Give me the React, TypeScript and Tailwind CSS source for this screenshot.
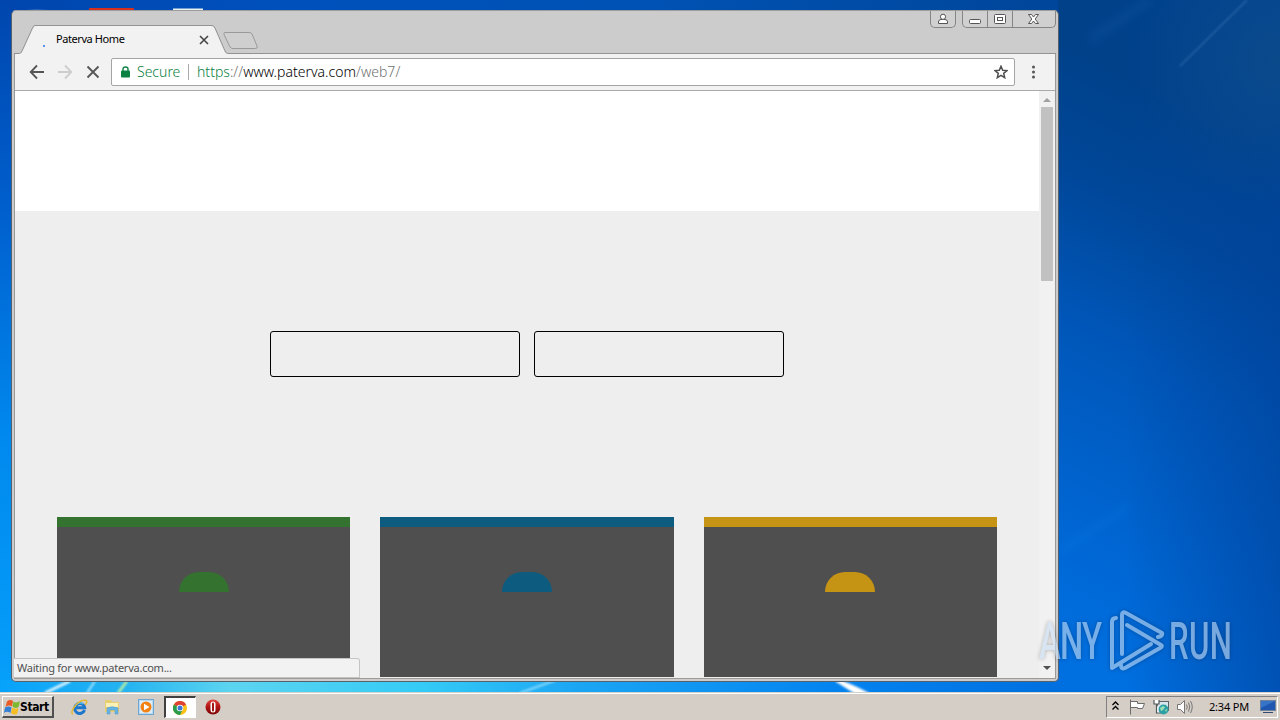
import type { ReactNode } from 'react'

const cards = [
  { name: 'green', bar: 'bg-[#34732f]' },
  { name: 'blue', bar: 'bg-[#0d5c80]' },
  { name: 'yellow', bar: 'bg-[#c69414]' },
]

function Wallpaper() {
  return (
    <svg className="absolute inset-0" width="1280" height="720" aria-hidden="true">
      <defs>
        <linearGradient id="left" x1="0" y1="0" x2="0" y2="1">
          <stop offset="0" stopColor="#0046ae" />
          <stop offset="0.3" stopColor="#0060ce" />
          <stop offset="0.6" stopColor="#0088ee" />
          <stop offset="1" stopColor="#06a2fb" />
        </linearGradient>
        <linearGradient id="top" x1="0" y1="0" x2="1" y2="0">
          <stop offset="0" stopColor="#0046ae" />
          <stop offset="0.25" stopColor="#0050bc" />
          <stop offset="0.6" stopColor="#0052b4" />
          <stop offset="1" stopColor="#00469a" />
        </linearGradient>
        <linearGradient id="right" gradientUnits="userSpaceOnUse" x1="1050" y1="640" x2="1290" y2="160">
          <stop offset="0" stopColor="#006fe0" />
          <stop offset="0.25" stopColor="#0064d0" />
          <stop offset="0.55" stopColor="#0056b8" />
          <stop offset="0.8" stopColor="#004799" />
          <stop offset="1" stopColor="#00418a" />
        </linearGradient>
        <linearGradient id="edge" x1="0" y1="0" x2="1" y2="0">
          <stop offset="0.3" stopColor="#00439c" stopOpacity="0" />
          <stop offset="1" stopColor="#00439c" stopOpacity="0.6" />
        </linearGradient>
        <radialGradient id="corner" gradientUnits="userSpaceOnUse" cx="1280" cy="60" r="150">
          <stop offset="0" stopColor="#0f4d86" stopOpacity="0.7" />
          <stop offset="1" stopColor="#0f4d86" stopOpacity="0" />
        </radialGradient>
        <linearGradient id="bottom" gradientUnits="userSpaceOnUse" x1="0" y1="0" x2="1280" y2="0">
          <stop offset="0" stopColor="#06a2fb" />
          <stop offset="0.1" stopColor="#26b4f0" />
          <stop offset="0.18" stopColor="#5cd4f0" />
          <stop offset="0.33" stopColor="#34cbf6" />
          <stop offset="0.45" stopColor="#1ba6f4" />
          <stop offset="0.65" stopColor="#0484f0" />
          <stop offset="0.83" stopColor="#006fe0" />
        </linearGradient>
        <filter id="soft" x="-20%" y="-20%" width="140%" height="140%">
          <feGaussianBlur stdDeviation="1" />
        </filter>
        <filter id="haze" x="-50%" y="-50%" width="200%" height="200%">
          <feGaussianBlur stdDeviation="5" />
        </filter>
      </defs>
      <rect width="1280" height="720" fill="url(#left)" />
      <rect x="11" width="1047" height="40" fill="url(#top)" />
      <rect x="1058" width="222" height="720" fill="url(#right)" />
      <rect x="1058" width="222" height="720" fill="url(#edge)" />
      <rect x="1058" width="222" height="240" fill="url(#corner)" />
      <rect y="680" width="1058" height="20" fill="url(#bottom)" />
      <path d="M1180 66 L1247 0" stroke="#5b93c8" strokeWidth="1.5" opacity="0.4" filter="url(#soft)" />
      <path d="M1090 40 L1150 0" stroke="#2a70b4" strokeWidth="8" opacity="0.2" filter="url(#haze)" />
      <path d="M1060 552 L1130 505" stroke="#2090f0" strokeWidth="5" opacity="0.2" filter="url(#haze)" />
      <g filter="url(#soft)">
        <path d="M45 693 L70 681" stroke="#dff5ff" strokeWidth="3" />
        <path d="M87 693 L95 681" stroke="#a8e4fb" strokeWidth="2" />
        <path d="M118 693 L127 681" stroke="#c4f0a0" strokeWidth="2.5" />
        <path d="M520 693 L556 680" stroke="#8ad8fb" strokeWidth="2" />
        <path d="M836 680 Q850 685 868 694 L858 694 Z" fill="#fff" stroke="#fff" strokeWidth="3" />
      </g>
      <path d="M25 11 v-1 q11 -1 24 0 v1z" fill="#5b83c6" />
      <rect x="89" y="8" width="45" height="4" rx="1" fill="#d8301f" />
      <rect x="173" y="8.5" width="30" height="3" fill="#e8f2ee" />
    </svg>
  )
}

function CaptionButtons() {
  return (
    <div className="flex items-start gap-1.5">
      <div className="flex h-[17px] w-[26px] items-center justify-center rounded-b-[5px] border border-t-0 border-[#858585] bg-[#d0d0d0]">
        <svg width="12" height="12" fill="#fff" stroke="#555" aria-hidden="true">
          <path d="M1.5 10.5 V9 Q1.5 6.5 4 6.5 H8 Q10.5 6.5 10.5 9 V10.5 Z" />
          <circle cx="6" cy="3.8" r="2.6" />
        </svg>
      </div>
      <div className="flex h-[17px] w-[94px] divide-x divide-[#858585] overflow-hidden rounded-b-[5px] border border-t-0 border-[#858585] bg-[#d0d0d0]">
        <div className="flex w-[25px] items-center justify-center">
          <svg width="13" height="14" aria-hidden="true">
            <rect x="0.5" y="7.5" width="11" height="4" rx="1" fill="#fff" stroke="#555" />
          </svg>
        </div>
        <div className="flex w-[25px] items-center justify-center">
          <svg width="12" height="11" fill="#fff" stroke="#555" aria-hidden="true">
            <rect x="0.5" y="0.5" width="11" height="9" rx="1" />
            <rect x="3.5" y="3.5" width="5" height="3" />
          </svg>
        </div>
        <div className="flex flex-1 items-center justify-center pr-0.5">
          <svg width="13" height="11" aria-hidden="true">
            <path
              d="M1.5 0.5 H4.5 L6.5 3 L8.5 0.5 H11.5 L8.2 5 L11.5 9.5 H8.5 L6.5 7 L4.5 9.5 H1.5 L4.8 5 Z"
              fill="#fff"
              stroke="#555"
            />
          </svg>
        </div>
      </div>
    </div>
  )
}

function TabStrip() {
  return (
    <div className="relative flex h-[43px] shrink-0 justify-between pr-[2px]">
      <svg className="absolute top-0 left-0" width="1046" height="43" aria-hidden="true">
        <path
          d="M2 42.5 H7 Q9 42.5 10 40 L20.5 17 Q21.5 14.5 23 14.5 H200 Q202 14.5 203 17 L213 40 Q214 42.5 216 42.5 H1044"
          fill="none"
          stroke="#939393"
        />
        <path d="M2 43 H7 Q9.5 43 10.5 40.5 L21 17.5 Q22 15 23.5 15 H199.5 Q201.5 15 202.5 17.5 L212.5 40.5 Q213.5 43 216 43 Z" fill="#f2f2f2" />
        <path
          d="M213 21.5 H237 Q239 21.5 240 23 L245 35 Q246 37.5 243.5 37.5 H221 Q219 37.5 218 36 L212 23.5 Q211.5 21.5 213 21.5 Z"
          fill="#cfcfcf"
          stroke="#9a9a9a"
        />
      </svg>
      <div className="relative flex h-[43px] w-[216px] items-center pt-[14px] pl-[31px]">
        <span className="mt-3 mr-[11px] size-0.5 bg-[#5b93e8]" />
        <span className="w-[143px] pb-0.5 font-['Noto_Sans','Open_Sans',sans-serif] text-[11px] leading-4 tracking-[-0.42px] whitespace-nowrap text-black">
          Paterva Home
        </span>
        <svg width="10" height="10" aria-hidden="true">
          <path d="M1 1 L9 9 M9 1 L1 9" stroke="#444" strokeWidth="1.6" />
        </svg>
      </div>
      <div className="relative">
        <CaptionButtons />
      </div>
    </div>
  )
}

function Toolbar() {
  return (
    <div className="flex h-[37px] shrink-0 items-center border-b border-[#aaa] bg-[#f2f2f2] pl-[14px]">
      <svg width="16" height="16" fill="none" stroke="#555" strokeWidth="1.8" aria-hidden="true">
        <path d="M15 8 H2 M8 1.5 L1.7 8 L8 14.5" />
      </svg>
      <svg className="ml-3" width="16" height="16" fill="none" stroke="#cdcdcd" strokeWidth="1.8" aria-hidden="true">
        <path d="M1 8 H14 M8 1.5 L14.3 8 L8 14.5" />
      </svg>
      <svg className="ml-[13px]" width="14" height="14" fill="none" stroke="#555" strokeWidth="1.8" aria-hidden="true">
        <path d="M1.5 1.5 L12.5 12.5 M12.5 1.5 L1.5 12.5" />
      </svg>
      <div className="ml-[11px] flex h-7 w-[904px] items-center rounded-[2px] border border-[#a5a5a5] bg-white pr-1.5 pl-[9px] font-['Noto_Sans','Open_Sans',sans-serif] text-sm leading-5">
        <svg width="9" height="12" aria-hidden="true">
          <path d="M2 5 V3 Q2 1 4.5 1 Q7 1 7 3 V5" fill="none" stroke="#0b8043" strokeWidth="1.4" />
          <rect y="4.5" width="9" height="7" rx="1" fill="#0b8043" />
        </svg>
        <span className="ml-[7px] w-[51px] font-light text-[#0b8043]">Secure</span>
        <span className="h-4 w-px bg-[#aaa]" />
        <span className="ml-2 flex-1 font-light tracking-[0.02px] whitespace-nowrap text-[#707070]">
          <span className="text-[#0b8043]">https</span>://<span className="text-black">www.paterva.com</span>/web7/
        </span>
        <svg width="14" height="14" aria-hidden="true">
          <path
            d="M7 1.2 L8.7 5.2 L13 5.6 L9.7 8.4 L10.7 12.7 L7 10.4 L3.3 12.7 L4.3 8.4 L1 5.6 L5.3 5.2 Z"
            fill="none"
            stroke="#4f4f4f"
            strokeWidth="1.5"
          />
        </svg>
      </div>
      <svg className="ml-4" width="5" height="14" fill="#555" aria-hidden="true">
        <circle cx="2.5" cy="2" r="1.5" />
        <circle cx="2.5" cy="7" r="1.5" />
        <circle cx="2.5" cy="12" r="1.5" />
      </svg>
    </div>
  )
}

function Scrollbar() {
  return (
    <div className="flex w-4 shrink-0 flex-col items-center justify-between bg-[#f1f1f1]">
      <div className="flex flex-col items-center">
        <svg width="8" height="16" aria-hidden="true">
          <path d="M0 11 L4 7 L8 11 Z" fill="#a0a0a0" />
        </svg>
        <div className="h-[174px] w-3 bg-[#c1c1c1]" />
      </div>
      <svg width="8" height="17" aria-hidden="true">
        <path d="M0 5 H8 L4 9 Z" fill="#505050" />
      </svg>
    </div>
  )
}

function Page() {
  return (
    <div className="flex h-[587px] w-[1024px] flex-col overflow-hidden bg-[#eee]">
      <div className="h-[120px] bg-white" />
      <div className="mt-[120px] flex justify-center gap-3.5">
        <div className="h-[46px] w-[250px] rounded-[3px] border border-black" />
        <div className="h-[46px] w-[250px] rounded-[3px] border border-black" />
      </div>
      <div className="mx-auto mt-[140px] grid w-[940px] grid-cols-3 gap-[30px]">
        {cards.map((card) => (
          <div key={card.name} className="flex h-40 flex-col items-center bg-[#4f4f4f]">
            <div className={`h-2.5 w-full ${card.bar}`} />
            <div className={`mt-[45px] h-5 w-[50px] rounded-t-[20px] ${card.bar}`} />
          </div>
        ))}
      </div>
    </div>
  )
}

function BrowserWindow() {
  return (
    <div className="absolute top-2.5 left-[11px] flex h-[672px] w-[1048px] flex-col rounded-[5px] border border-[#56616c] border-t-[#9d9d9d] bg-[#ccc]">
      <TabStrip />
      <div className="mx-0.5 flex flex-1 flex-col border-x border-[#999] bg-[#f2f2f2]">
        <Toolbar />
        <div className="flex h-[587px]">
          <Page />
          <Scrollbar />
        </div>
      </div>
      <div className="mx-0.5 h-[3px] shrink-0 border-t border-[#a09a90]" />
      <div className="absolute bottom-[3px] left-0.5 flex h-5 w-[346px] items-center rounded-tr-[3px] border border-l-0 border-[#c4c4c4] bg-[#f2f2f2] pl-[3px] font-['Noto_Sans','Open_Sans',sans-serif] text-[11px] tracking-[-0.24px] whitespace-nowrap text-[#505050]">
        Waiting for www.paterva.com...
      </div>
    </div>
  )
}

function Watermark() {
  return (
    <svg
      className="absolute top-[600px] left-[1030px] drop-shadow-[0_0_2px_rgba(0,0,0,0.45)]"
      width="220"
      height="82"
      fill="#c9dcf2"
      opacity="0.6"
      aria-label="ANY RUN"
    >
      {/* the letters are squeezed sideways to get the condensed cut */}
      <g fontFamily="Roboto, 'Liberation Sans', sans-serif" fontSize="52" fontWeight="500">
        <text transform="translate(9 59) scale(0.63 1)" textLength="100">ANY</text>
        <text transform="translate(139 59) scale(0.6 1)" textLength="105">RUN</text>
      </g>
      <g fill="none" stroke="#c9dcf2" strokeWidth="4" strokeLinejoin="round" strokeLinecap="round">
        <path d="M86 18 Q82 18 82 22 V68 L121 44" />
        <path d="M92 54 V15 Q92 11 96 13 L132 33 Q133 36 128 37" />
        <path d="M97 25 L131 45 Q133 46 130 48 L95 68 Q91 70 91 65" />
      </g>
    </svg>
  )
}

function StartFlag() {
  return (
    <svg width="16" height="16" aria-hidden="true">
      <path d="M3 2.5 Q6 0 9 2 L8 7.5 Q5 5.5 1.5 8Z" fill="#e95a24" />
      <path d="M9.5 2.5 Q12 4.5 16 2 L14.5 8 Q11 10 8.5 7.5Z" fill="#7cb92f" />
      <path d="M1 8.5 Q5 6.5 7.5 8.5 L6.5 14 Q3 11.5 0 14Z" fill="#347fd3" />
      <path d="M8.2 8.5 Q11 10.5 14.5 9 L13 15 Q10 16.5 7 14Z" fill="#f4bd24" />
    </svg>
  )
}

function IeIcon() {
  return (
    <svg width="17" height="17" fill="none" aria-hidden="true">
      <path d="M13.5 11 A5 5 0 1 1 13.7 8.8 H5" stroke="#1c76cc" strokeWidth="3" />
      <path d="M12 5 A5 5 0 0 0 4 8" stroke="#4db9f0" strokeWidth="1.5" />
      <path d="M2 15 Q-1 14 4 7 Q10 0 15 1.5 Q17 2.5 14 6" stroke="#e4b72d" strokeWidth="1.4" />
    </svg>
  )
}

function FolderIcon() {
  return (
    <svg width="17" height="16" aria-hidden="true">
      <path d="M1 3 V1 H7 L8 3 H15 V13 H1Z" fill="#e8ce73" />
      <path d="M2 4 H14 V8 H2Z" fill="#fbf0b5" />
      <path d="M3 15 V9 Q8 6.5 14 9 V15 H11 V11 H6 V15Z" fill="#68b5e4" stroke="#4595c9" strokeWidth="0.5" />
    </svg>
  )
}

function MediaIcon() {
  return (
    <svg width="16" height="16" aria-hidden="true">
      <rect x="0.5" y="0.5" width="15" height="15" fill="#b8d9f1" stroke="#6ca6d2" />
      <rect x="2" y="2" width="12" height="12" fill="#deedf8" />
      <circle cx="8" cy="8" r="5.5" fill="#f28313" />
      <path d="M6 4.8 L11.5 8 L6 11.2Z" fill="#fff" />
    </svg>
  )
}

function ChromeIcon() {
  return (
    <svg width="14" height="14" aria-hidden="true">
      <circle cx="7" cy="7" r="7" fill="#fbc116" />
      <path d="M7 7 L0.9 3.5 A7 7 0 0 1 13.1 3.5 Z" fill="#df4132" />
      <path d="M7 7 L0.9 3.5 A7 7 0 0 0 7 14 L9.5 9Z" fill="#2a9c4b" />
      <circle cx="7" cy="7" r="3.3" fill="#fff" />
      <circle cx="7" cy="7" r="2.5" fill="#3e78d6" />
    </svg>
  )
}

function OperaIcon() {
  return (
    <svg width="16" height="16" aria-hidden="true">
      <defs>
        <linearGradient id="opera" x1="0" y1="0" x2="0" y2="1">
          <stop offset="0" stopColor="#e0443e" />
          <stop offset="0.5" stopColor="#b01515" />
          <stop offset="1" stopColor="#7c0808" />
        </linearGradient>
      </defs>
      <circle cx="8" cy="8" r="7.5" fill="url(#opera)" />
      <rect x="5.5" y="2.5" width="5" height="11" rx="2.5" fill="#fff" />
      <rect x="7" y="3.5" width="2" height="9" rx="1" fill="#a31515" />
    </svg>
  )
}

function QuickLaunch({ children, active = false }: { children: ReactNode; active?: boolean }) {
  return (
    <div
      className={`flex h-[22px] w-8 items-center justify-center ${
        active ? 'border-t-2 border-r border-b border-l-2 border-t-[#404040] border-r-white border-b-white border-l-[#404040] bg-white' : ''
      }`}
    >
      {children}
    </div>
  )
}

function Tray() {
  return (
    <div className="flex h-[22px] w-[172px] items-center border border-t-[#808080] border-r-white border-b-white border-l-[#808080] pl-[5px]">
      <svg className="mb-0.5" width="7" height="10" fill="none" stroke="#000" strokeWidth="1.4" aria-hidden="true">
        <path d="M0.5 4 L3.5 1 L6.5 4 M0.5 8.5 L3.5 5.5 L6.5 8.5" />
      </svg>
      <svg className="ml-2.5" width="16" height="16" fill="#fff" stroke="#6c6c6c" aria-hidden="true">
        <path d="M1.5 0.5 V15.5 M1.5 2.5 H8.5 V4.5 H15.5 L13.5 9.5 H8.5 V8.5 H1.5" />
      </svg>
      <svg className="ml-2" width="17" height="16" aria-hidden="true">
        <rect x="4.5" y="2.5" width="11" height="9" fill="#d9e6ed" stroke="#5c6469" />
        <path d="M1 1 V5 H6 V1 M3.5 5 V14 H8" fill="#fff" stroke="#50585c" strokeWidth="1.2" />
        <circle cx="10.5" cy="10.5" r="5" fill="#2e9fa4" />
        <path d="M7 9 L10 7 L12 8 L10 11 L8 12Z M12 11 L14.5 10 L13 13Z" fill="#9de0b7" />
      </svg>
      <svg className="ml-[7px]" width="17" height="16" fill="none" stroke="#777" aria-hidden="true">
        <path d="M0.5 5.5 H3.5 L7.5 1.5 V14.5 L3.5 10.5 H0.5Z" fill="#fff" />
        <path d="M9.5 5.5 Q11 8 9.5 10.5 M11.5 3.5 Q14 8 11.5 12.5 M13.5 2 Q17 8 13.5 14" />
      </svg>
      <span className="ml-[15px] w-[51px] font-['Noto_Sans','Open_Sans',sans-serif] text-[11px] tracking-[-0.2px] whitespace-nowrap text-black">
        2:34 PM
      </span>
      <svg width="16" height="14" aria-hidden="true">
        <rect x="0.5" y="0.5" width="15" height="10" fill="#1e56b0" stroke="#71839a" />
        <path d="M1 1 H15 L1 8Z" fill="#3674c8" />
        <path d="M3 12 H13 V13 H3Z" fill="#304a72" />
      </svg>
    </div>
  )
}

function Taskbar() {
  return (
    <div className="absolute bottom-0 left-0 flex h-7 w-full items-center justify-between border-t border-[#d4d0c8] bg-[#d5cec7] pt-px pr-0.5 pl-0.5 shadow-[inset_0_1px_#fff]">
      <div className="flex items-center">
        <div className="flex h-[22px] w-[52px] items-center border-t border-r-2 border-b-2 border-l border-t-white border-r-[#505050] border-b-[#505050] border-l-white pl-px">
          <StartFlag />
          <span className="pt-px font-['DejaVu_Sans_Condensed','DejaVu_Sans',sans-serif] text-[12px] font-bold tracking-[-0.4px] text-black">
            Start
          </span>
        </div>
        <div className="ml-[9px] flex gap-[1.5px]">
          <QuickLaunch><IeIcon /></QuickLaunch>
          <QuickLaunch><FolderIcon /></QuickLaunch>
          <QuickLaunch><MediaIcon /></QuickLaunch>
          <QuickLaunch active><ChromeIcon /></QuickLaunch>
          <QuickLaunch><OperaIcon /></QuickLaunch>
        </div>
      </div>
      <Tray />
    </div>
  )
}

export default function App() {
  return (
    <div className="relative h-[720px] w-[1280px] overflow-hidden bg-[#0058c0]">
      <Wallpaper />
      <BrowserWindow />
      <Taskbar />
      <Watermark />
    </div>
  )
}
